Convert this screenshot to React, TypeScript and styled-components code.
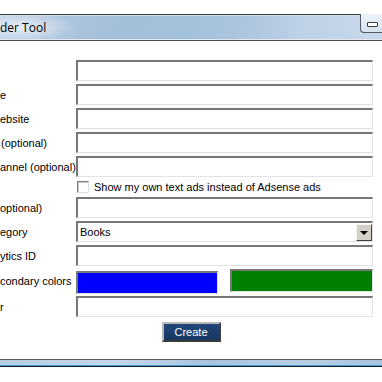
import styled, {createGlobalStyle} from 'styled-components'

const GlobalStyle = createGlobalStyle`
  html, body {
    margin: 0;
    padding: 0;
    background: #ffffff;
  }
  body {
    font-family: "Liberation Sans", Arial, sans-serif;
    font-size: 11px;
    color: #000000;
  }
`

interface FieldRow {
  label: string
  indent?: number
  kind: 'text' | 'select'
  value?: string
}

const topFields: FieldRow[] = [
  {label: '', kind: 'text'},
  {label: 'e', kind: 'text'},
  {label: 'ebsite', kind: 'text'},
  {label: '(optional)', indent: 1, kind: 'text'},
  {label: 'annel (optional)', kind: 'text'},
]

const bottomFields: FieldRow[] = [
  {label: 'optional)', kind: 'text'},
  {label: 'egory', kind: 'select', value: 'Books'},
  {label: 'ytics ID', kind: 'text'},
]

function renderField(field: FieldRow) {
  return (
    <Row key={field.label}>
      <Label indent={field.indent ?? 0}>{field.label}</Label>
      {field.kind === 'select' ? (
        <SelectBox>
          <SelectValue>{field.value}</SelectValue>
          <DropButton><Arrow /></DropButton>
        </SelectBox>
      ) : (
        <TextInput type="text" />
      )}
    </Row>
  )
}

function App() {
  return (
    <Page>
      <GlobalStyle />
      <TitleBar>
        <TitleText>der Tool</TitleText>
        <MinButton><MinDash /></MinButton>
      </TitleBar>
      <Form>
        <Fields>
          {topFields.map(renderField)}
          <CheckRow>
            <CheckBox />
            <CheckText>Show my own text ads instead of Adsense ads</CheckText>
          </CheckRow>
          {bottomFields.map(renderField)}
          <Row>
            <Label indent={0}>condary colors</Label>
            <Swatches>
              <Swatch color="#0000ff" width={142} offset={1} />
              <Swatch color="#008000" width={143} offset={-1} />
            </Swatches>
          </Row>
          <Row>
            <Label indent={0}>r</Label>
            <TextInput type="text" />
          </Row>
        </Fields>
        <ButtonRow>
          <CreateButton>Create</CreateButton>
        </ButtonRow>
      </Form>
      <BottomBar />
    </Page>
  )
}

export default App

const Page = styled.div`
  width: 382px;
  height: 382px;
  padding-top: 14px;
  box-sizing: border-box;
  overflow: hidden;
`

const TitleBar = styled.div`
  height: 27px;
  box-sizing: border-box;
  display: flex;
  align-items: center;
  border-top: 1px solid #3e3e3e;
  border-bottom: 1px solid #4c4c4c;
  box-shadow: inset 0 1px 0 #d0dcea, inset 0 -1px 0 #dfe8f2;
  background:
    radial-gradient(ellipse 58px 15px at 20px 50%, rgba(232, 239, 247, 0.95), rgba(232, 239, 247, 0) 100%),
    linear-gradient(100deg, #bfd2e6 0%, #acc4dc 18%, #a4bfd8 32%, #a4c2dc 50%, #abc4dc 62%, #bfd2e6 80%, #c9d9ea 100%);
`

const TitleText = styled.span`
  font-family: "Open Sans", "Noto Sans", sans-serif;
  font-size: 12px;
  color: #000000;
  line-height: 1;
  margin-top: 1px;
`

const MinButton = styled.div`
  margin-left: auto;
  align-self: flex-start;
  margin-top: -1px;
  width: 22px;
  height: 19px;
  box-sizing: border-box;
  border-left: 1px solid #505a64;
  border-bottom: 1px solid #505a64;
  border-bottom-left-radius: 4px;
  background: linear-gradient(#eef3f9, #d6e2ef);
  display: flex;
  align-items: center;
  justify-content: center;
  padding-left: 1px;
`

const MinDash = styled.div`
  width: 11px;
  height: 5px;
  box-sizing: border-box;
  border: 1px solid #3c3c3c;
  border-radius: 1px;
  background: #ffffff;
  margin-top: 2px;
`

const Form = styled.div`
  padding-top: 19px;
  display: flex;
  flex-direction: column;
`

const Fields = styled.div`
  display: flex;
  flex-direction: column;
  gap: 3px;
  margin-right: 9px;
`

const Row = styled.div`
  display: grid;
  grid-template-columns: 76px 1fr;
  align-items: center;
`

const Label = styled.span<{indent: number}>`
  padding-left: ${({indent}) => indent}px;
  white-space: nowrap;
  font-size: 11px;
  line-height: 14px;
`

const TextInput = styled.input`
  height: 21px;
  box-sizing: border-box;
  margin: 0;
  padding: 0 2px;
  background: #ffffff;
  border-top: 2px solid #777777;
  border-left: 2px solid #777777;
  border-right: 1px solid #e2e2e2;
  border-bottom: 1px solid #e2e2e2;
  outline: none;
`

const SelectBox = styled.div`
  height: 21px;
  box-sizing: border-box;
  display: flex;
  align-items: center;
  background: #ffffff;
  border-top: 2px solid #777777;
  border-left: 2px solid #777777;
  border-right: 1px solid #e2e2e2;
  border-bottom: 1px solid #e2e2e2;
`

const SelectValue = styled.span`
  padding-left: 2px;
  font-size: 11px;
`

const DropButton = styled.div`
  margin-left: auto;
  width: 16px;
  height: 17px;
  box-sizing: border-box;
  background: #d4d0c8;
  border: 1px solid;
  border-color: #f4f4f4 #404040 #404040 #f4f4f4;
  display: flex;
  align-items: center;
  justify-content: center;
`

const Arrow = styled.div`
  width: 0;
  height: 0;
  border-left: 4px solid transparent;
  border-right: 4px solid transparent;
  border-top: 4px solid #000000;
  margin-top: 1px;
`

const CheckRow = styled.div`
  height: 14px;
  display: flex;
  align-items: center;
  gap: 5px;
  padding-left: 77px;
`

const CheckBox = styled.div`
  width: 12px;
  height: 12px;
  box-sizing: border-box;
  background: #ffffff;
  border-top: 1px solid #808080;
  border-left: 1px solid #808080;
  border-right: 1px solid #e0e0e0;
  border-bottom: 1px solid #e0e0e0;
  box-shadow: inset 1px 1px 0 #c8c8c8;
`

const CheckText = styled.span`
  font-size: 11px;
  white-space: nowrap;
`

const Swatches = styled.div`
  display: flex;
  gap: 12px;
  height: 24px;
  align-items: center;
`

const Swatch = styled.div<{color: string; width: number; offset: number}>`
  width: ${({width}) => width}px;
  height: 23px;
  box-sizing: border-box;
  margin-top: ${({offset}) => offset * 2}px;
  background: ${({color}) => color};
  border-top: 2px solid #777777;
  border-left: 2px solid #777777;
  border-right: 1px solid #e2e2e2;
  border-bottom: 1px solid #e2e2e2;
`

const ButtonRow = styled.div`
  display: flex;
  justify-content: center;
  margin-top: 5px;
`

const CreateButton = styled.button`
  width: 59px;
  height: 20px;
  box-sizing: border-box;
  margin: 0;
  padding: 0;
  font-family: "Liberation Sans", Arial, sans-serif;
  font-size: 11px;
  color: #ffffff;
  background:
    repeating-linear-gradient(45deg, rgba(255, 255, 255, 0.04) 0 1px, transparent 1px 3px),
    linear-gradient(#1f4478, #14335f);
  border: 2px solid;
  border-color: #b8b8b8 #3a3a3a #3a3a3a #b8b8b8;
`

const BottomBar = styled.div`
  margin-top: 17px;
  height: 8px;
  box-sizing: border-box;
  border-top: 1px solid #555a60;
  border-bottom: 1px solid #1a1a1a;
  background:
    linear-gradient(#3aa2dc, #3aa2dc) bottom / 100% 1px no-repeat,
    linear-gradient(100deg, #b6cde4 0%, #c7d8ea 30%, #a9c3dc 55%, #b8cee4 80%, #aac3db 100%);
`
